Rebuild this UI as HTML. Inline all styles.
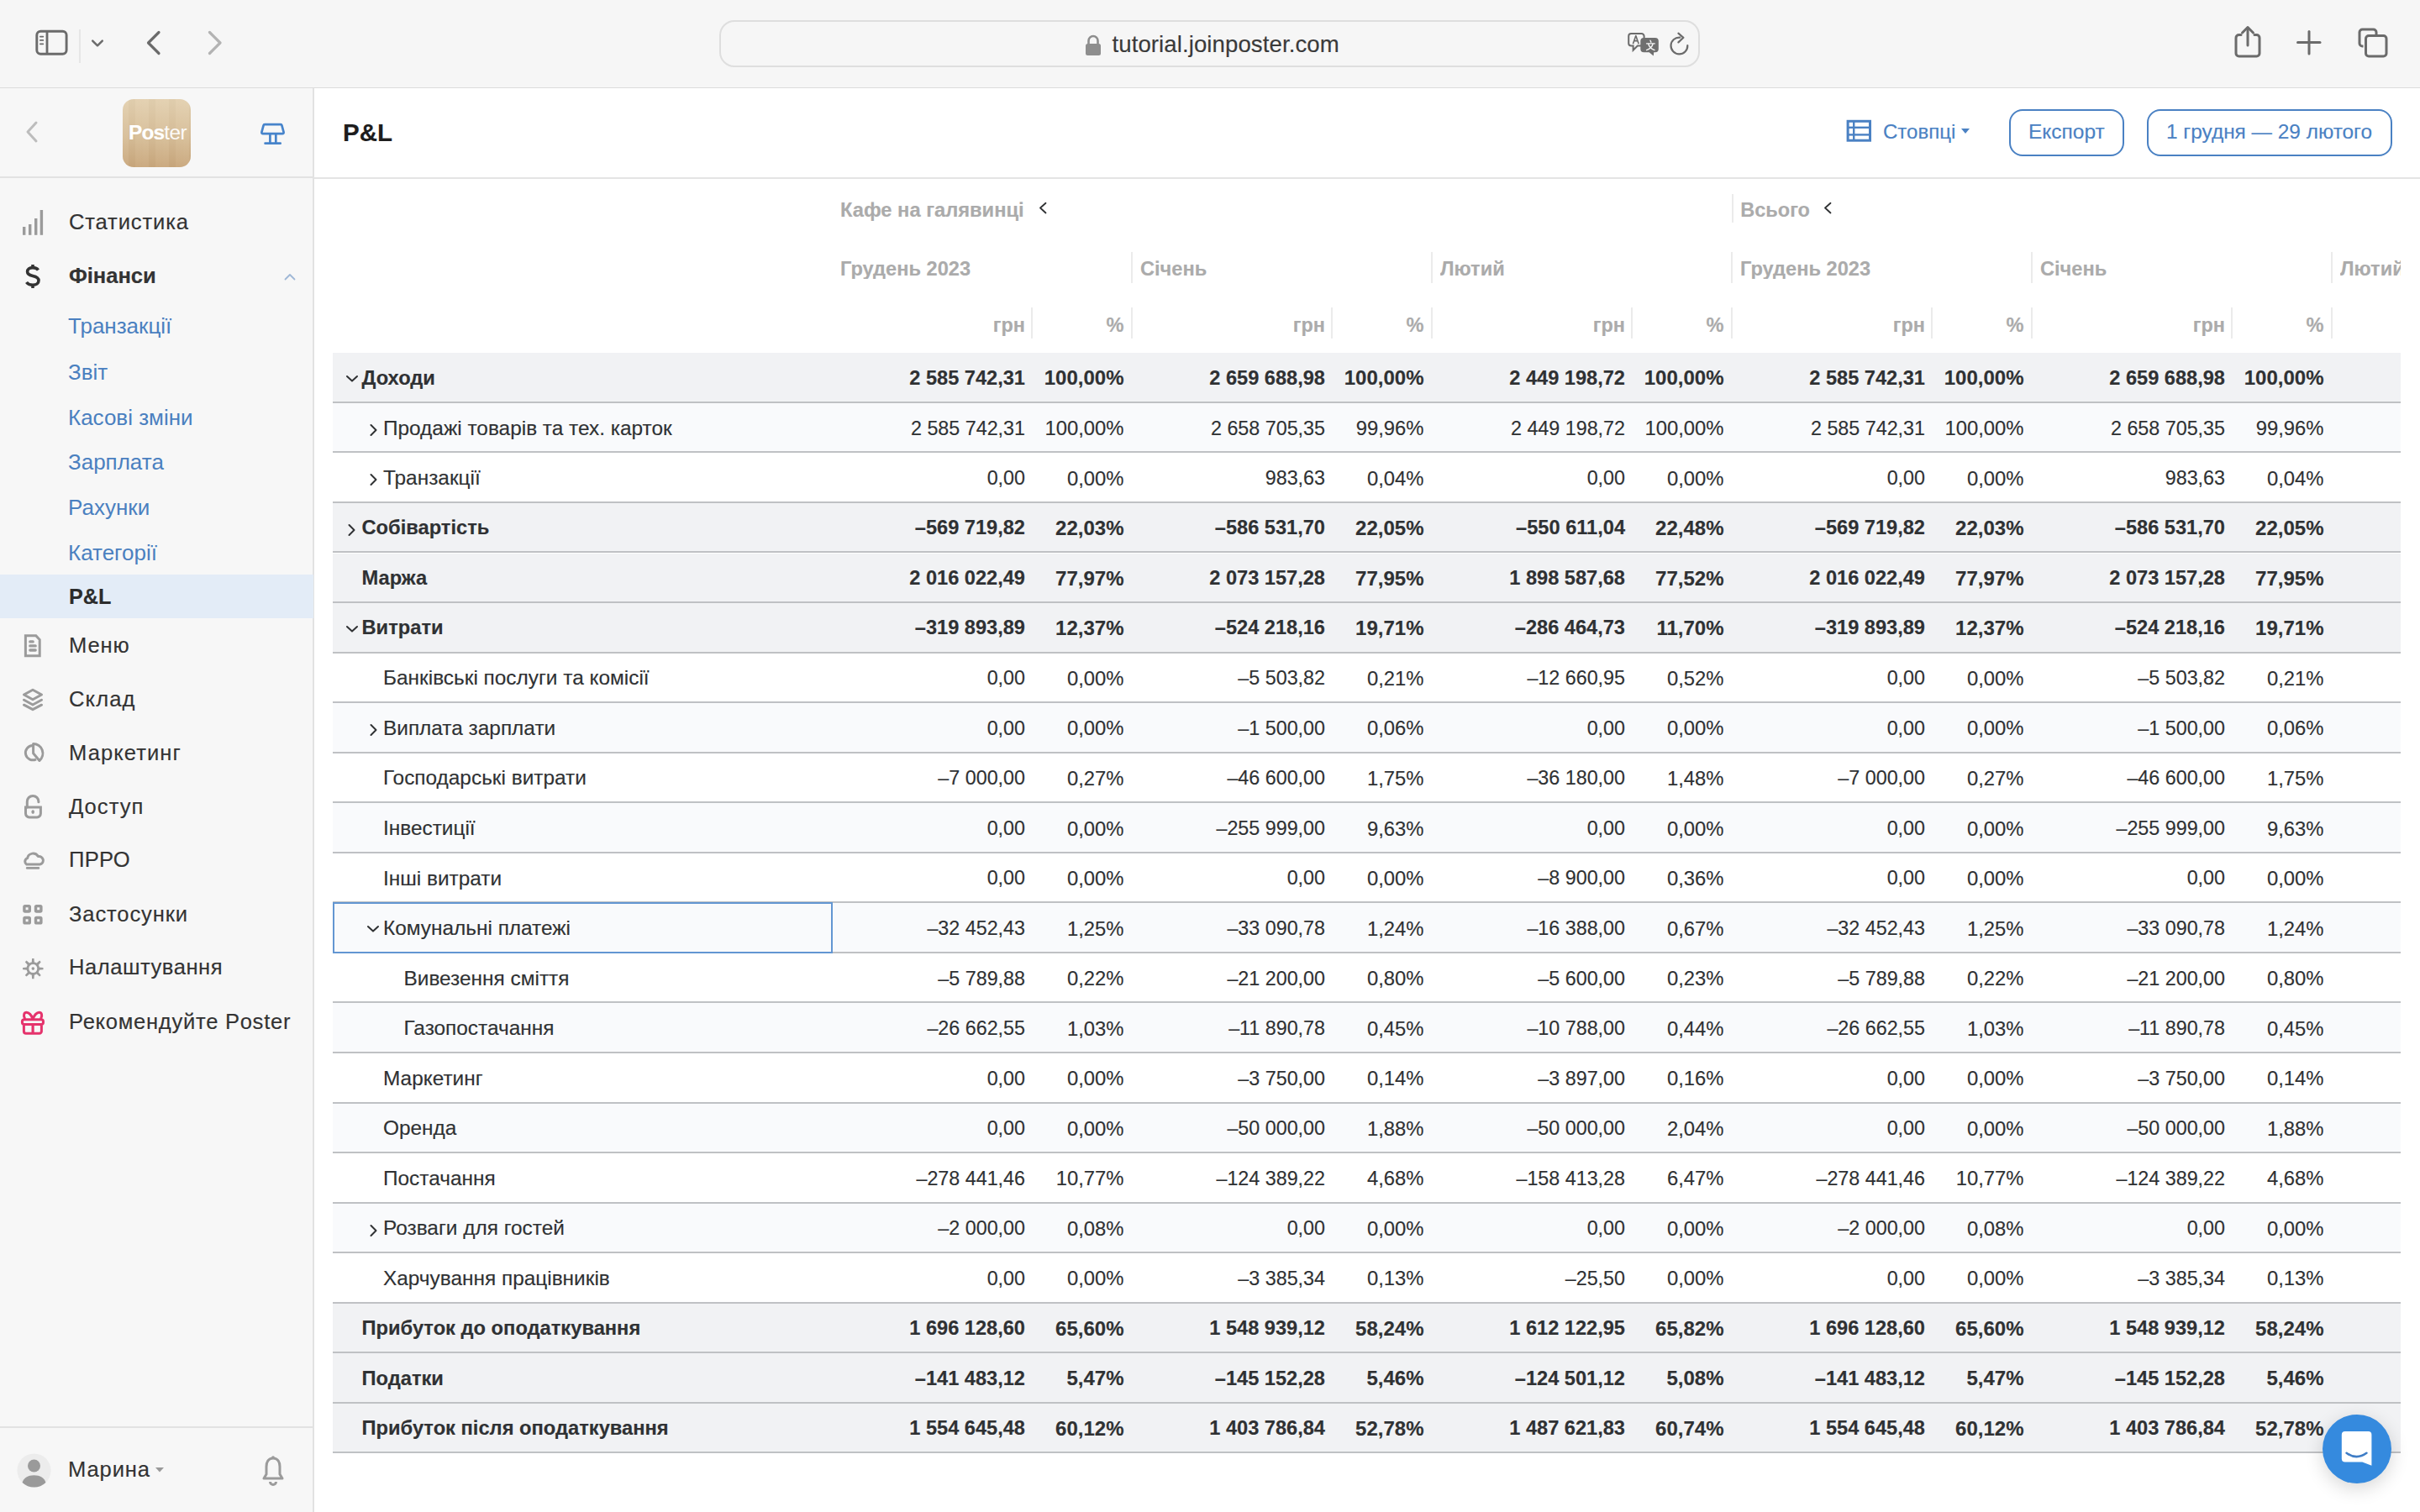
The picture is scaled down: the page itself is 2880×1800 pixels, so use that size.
<!DOCTYPE html><html><head><meta charset="utf-8"><style>
*{box-sizing:border-box;margin:0;padding:0}
html,body{width:2880px;height:1800px;overflow:hidden;background:#fff;font-family:"Liberation Sans", sans-serif;}
.abs{position:absolute}
.t{position:absolute;white-space:pre;line-height:1;-webkit-text-stroke:0.15px currentColor}
#toolbar{position:absolute;left:0;top:0;width:2880px;height:105.5px;background:#f6f6f6;border-bottom:2px solid #dcdcdc}
#side{position:absolute;left:0;top:105px;width:374px;height:1695px;background:#f7f7f7;border-right:2px solid #e2e2e2}
#mainhead{position:absolute;left:374px;top:105px;width:2506px;height:108px;background:#fff;border-bottom:2px solid #e4e4e4}
.side-main{color:#333;font-size:27px}
.side-sub{color:#4a86c4;font-size:26px}
.hdr{color:#aaaaaa;font-weight:bold;font-size:24px}
.row{position:absolute;left:396px;width:2461px;border-bottom:2px solid #bfc1c4;overflow:hidden}
.row.sec{background:#f1f2f4}
.row.odd{background:#f9fafc}
.row.even{background:#fff}
.cell{position:absolute;top:0;white-space:pre;font-size:24px;color:#2f3133;text-align:right;-webkit-text-stroke:0.15px currentColor}
.sec .cell,.sec .lbl{font-weight:bold}
.lbl{position:absolute;top:0;white-space:pre;font-size:24px;color:#2f3133;-webkit-text-stroke:0.15px currentColor}
.vsep{position:absolute;width:1.5px;background:#ebebeb}
</style></head><body>
<div id="toolbar"></div>
<svg class="abs" style="left:40px;top:34px" width="44" height="34" viewBox="0 0 44 34">
<rect x="3.8" y="3.2" width="35.3" height="27" rx="4.5" fill="none" stroke="#6b6b6b" stroke-width="2.9"/>
<line x1="16" y1="3" x2="16" y2="30" stroke="#6b6b6b" stroke-width="2.8"/>
<line x1="7.9" y1="9.6" x2="11.3" y2="9.6" stroke="#6b6b6b" stroke-width="1.8" stroke-linecap="round"/>
<line x1="7.9" y1="13.9" x2="11.3" y2="13.9" stroke="#6b6b6b" stroke-width="1.8" stroke-linecap="round"/>
<line x1="7.9" y1="18.3" x2="11.3" y2="18.3" stroke="#6b6b6b" stroke-width="1.8" stroke-linecap="round"/>
</svg>
<div class="abs" style="left:94px;top:35px;width:2px;height:40px;background:#e6e6e6"></div>
<svg class="abs" style="left:106px;top:44px" width="20" height="14" viewBox="0 0 20 14"><polyline points="4.2,4.6 10,10.3 15.8,4.6" fill="none" stroke="#6b6b6b" stroke-width="2.5" stroke-linecap="round" stroke-linejoin="round"/></svg>
<svg class="abs" style="left:170px;top:34px" width="26" height="34" viewBox="0 0 26 34"><polyline points="19,4.5 6.5,17 19,29.5" fill="none" stroke="#6b6b6b" stroke-width="3.2" stroke-linecap="round" stroke-linejoin="round"/></svg>
<svg class="abs" style="left:243px;top:34px" width="26" height="34" viewBox="0 0 26 34"><polyline points="6.5,4.5 19,17 6.5,29.5" fill="none" stroke="#b3b3b3" stroke-width="3.2" stroke-linecap="round" stroke-linejoin="round"/></svg>
<div class="abs" style="left:856px;top:24px;width:1167px;height:56px;border:2px solid #dedede;border-radius:18px;background:#f6f6f6"></div>
<svg class="abs" style="left:1290px;top:39px" width="22" height="30" viewBox="0 0 22 30">
<path d="M5.5 13 V9.5 a5.5 5.5 0 0 1 11 0 V13" fill="none" stroke="#8e8e8e" stroke-width="2.6"/>
<rect x="2" y="13" width="18" height="14" rx="2.5" fill="#8e8e8e"/></svg>
<div class="t" style="left:1323.5px;top:38.94px;font-size:27.6px;color:#3a3a3a;font-weight:400;letter-spacing:0.08px">tutorial.joinposter.com</div>
<svg class="abs" style="left:1934px;top:37px" width="42" height="32" viewBox="0 0 42 32">
<path d="M7.2 3.1 H19.6 a3 3 0 0 1 3 3 V14.5 a3 3 0 0 1 -3 3 H14.8 L9.6 22.8 V17.5 H7.2 a3 3 0 0 1 -3 -3 V6.1 a3 3 0 0 1 3 -3z" fill="#f6f6f6" stroke="#6b6b6b" stroke-width="2"/>
<path d="M9.4 15.2 L12.8 5.6 L16.2 15.2 M10.6 11.6 H15" fill="none" stroke="#6b6b6b" stroke-width="1.6" stroke-linejoin="round"/>
<path d="M22.3 8 H35.8 a4 4 0 0 1 4 4 V21.2 a4 4 0 0 1 -4 4 H34.2 L33.8 29.6 L28.6 25.2 H22.3 a4 4 0 0 1 -4 -4 V12 a4 4 0 0 1 4 -4z" fill="#6f6f6f"/>
<path d="M25.6 14.9 H35.2 M30 11.2 L30.9 13.2 M27.6 15 C28.8 19.4 31.4 21.4 35 22.6 M33.2 15 C32 19.4 29.4 21.4 25.6 22.6" fill="none" stroke="#f6f6f6" stroke-width="1.4" stroke-linecap="round"/>
</svg>
<svg class="abs" style="left:1984px;top:36px" width="30" height="32" viewBox="0 0 30 32">
<path d="M15.2 8.6 A9.9 9.9 0 1 0 24.3 18.2" fill="none" stroke="#6b6b6b" stroke-width="2.2" stroke-linecap="round"/>
<polyline points="13.4,3.7 19.4,8.8 13.4,14.4" fill="none" stroke="#6b6b6b" stroke-width="2.2" stroke-linecap="round" stroke-linejoin="round"/>
</svg>
<svg class="abs" style="left:2656px;top:29px" width="38" height="42" viewBox="0 0 38 42">
<path d="M11 12.5 H8.5 a3.5 3.5 0 0 0 -3.5 3.5 V34.5 a3.5 3.5 0 0 0 3.5 3.5 H29.5 a3.5 3.5 0 0 0 3.5 -3.5 V16 a3.5 3.5 0 0 0 -3.5 -3.5 H27" fill="none" stroke="#6b6b6b" stroke-width="3" stroke-linecap="round"/>
<line x1="19" y1="4" x2="19" y2="25" stroke="#6b6b6b" stroke-width="3" stroke-linecap="round"/>
<polyline points="12.5,10 19,3.5 25.5,10" fill="none" stroke="#6b6b6b" stroke-width="3" stroke-linecap="round" stroke-linejoin="round"/>
</svg>
<svg class="abs" style="left:2730px;top:33px" width="36" height="36" viewBox="0 0 36 36">
<line x1="18" y1="4.5" x2="18" y2="31" stroke="#6b6b6b" stroke-width="3" stroke-linecap="round"/>
<line x1="4.5" y1="17.5" x2="31" y2="17.5" stroke="#6b6b6b" stroke-width="3" stroke-linecap="round"/>
</svg>
<svg class="abs" style="left:2802px;top:30px" width="44" height="42" viewBox="0 0 44 42">
<path d="M10.5 25 H9.5 a3.5 3.5 0 0 1 -3.5 -3.5 V8.5 a3.5 3.5 0 0 1 3.5 -3.5 H22.5 a3.5 3.5 0 0 1 3.5 3.5 V12" fill="none" stroke="#6b6b6b" stroke-width="3"/>
<rect x="13.5" y="12.5" width="24.5" height="24.5" rx="3.5" fill="#f6f6f6" stroke="#6b6b6b" stroke-width="3"/>
</svg>
<div id="side"></div>
<div class="abs" style="left:0;top:210px;width:373px;height:2px;background:#e2e2e2"></div>
<svg class="abs" style="left:28px;top:142px" width="20" height="30" viewBox="0 0 20 30"><polyline points="15,4 5,15 15,26" fill="none" stroke="#bdbdbd" stroke-width="3" stroke-linecap="round" stroke-linejoin="round"/></svg>
<div class="abs" style="left:146px;top:118px;width:81px;height:81px;border-radius:13px;overflow:hidden;background:linear-gradient(180deg,#e3d0b0 0%,#d7be98 55%,#c9a77c 100%)">
<div class="abs" style="left:0;top:0;width:81px;height:81px;background:repeating-linear-gradient(90deg,rgba(255,255,255,0.04) 0 7px,rgba(0,0,0,0.015) 7px 15px,rgba(255,255,255,0.03) 15px 24px)"></div>
</div>
<div class="t" style="left:153px;top:145.6px;font-size:24.4px;color:#fff;letter-spacing:-0.8px"><b>Pos</b><span style="font-weight:400;letter-spacing:-0.6px;opacity:0.93;-webkit-text-stroke:0">ter</span></div>
<svg class="abs" style="left:306px;top:143px" width="38" height="34" viewBox="0 0 38 34">
<path d="M9 5.2 H28 a1.5 1.5 0 0 1 1.45 1.1 L31.6 14.3 a1.5 1.5 0 0 1 -1.45 1.9 H6.85 a1.5 1.5 0 0 1 -1.45 -1.9 L7.55 6.3 A1.5 1.5 0 0 1 9 5.2z" fill="none" stroke="#4784cb" stroke-width="2.7" stroke-linejoin="round"/>
<line x1="15.4" y1="16.2" x2="15.4" y2="27" stroke="#4784cb" stroke-width="2.7"/>
<line x1="22.3" y1="16.2" x2="22.3" y2="27" stroke="#4784cb" stroke-width="2.7"/>
<line x1="9.6" y1="27.7" x2="27.7" y2="27.7" stroke="#4784cb" stroke-width="2.7" stroke-linecap="round"/>
</svg>
<svg class="abs" style="left:24px;top:248px" width="30" height="34" viewBox="0 0 30 34">
<rect x="3" y="22" width="3.4" height="9.8" fill="#9b9b9b"/><rect x="10" y="19" width="3.4" height="12.8" fill="#9b9b9b"/>
<rect x="17" y="12" width="3.4" height="19.8" fill="#9b9b9b"/><rect x="23.7" y="2" width="3.4" height="29.8" fill="#9b9b9b"/></svg>
<div class="t" style="left:82px;top:251.93px;font-size:25.6px;color:#333;font-weight:400;letter-spacing:0.84px">Статистика</div>
<svg class="abs" style="left:25px;top:312px" width="28" height="34" viewBox="0 0 28 34">
<path d="M20.5 9.5 C19 7.3 17 6.6 14 6.6 C10 6.6 7.6 8.5 7.6 11.5 C7.6 14.5 10 15.6 14 16.4 C18.5 17.3 21 18.6 21 22 C21 25.3 18.3 27.3 14 27.3 C10.5 27.3 8.2 26.3 6.5 24" fill="none" stroke="#333" stroke-width="3.6" stroke-linecap="butt"/>
<line x1="14" y1="3" x2="14" y2="7" stroke="#333" stroke-width="3.6"/>
<line x1="14" y1="27" x2="14" y2="31" stroke="#333" stroke-width="3.6"/>
</svg>
<div class="t" style="left:82px;top:315.93px;font-size:25.6px;color:#333;font-weight:700;letter-spacing:-0.05px">Фінанси</div>
<svg class="abs" style="left:336px;top:322px" width="18" height="14" viewBox="0 0 18 14"><polyline points="3.5,10.5 9,5 14.5,10.5" fill="none" stroke="#9fb8d6" stroke-width="1.8" stroke-linecap="round" stroke-linejoin="round"/></svg>
<div class="t" style="left:81px;top:375.09px;font-size:26px;color:#4a80c0;font-weight:400;-webkit-text-stroke:0">Транзакції</div>
<div class="t" style="left:81px;top:429.69px;font-size:26px;color:#4a80c0;font-weight:400;-webkit-text-stroke:0">Звіт</div>
<div class="t" style="left:81px;top:483.79px;font-size:26px;color:#4a80c0;font-weight:400;-webkit-text-stroke:0">Касові зміни</div>
<div class="t" style="left:81px;top:536.79px;font-size:26px;color:#4a80c0;font-weight:400;-webkit-text-stroke:0">Зарплата</div>
<div class="t" style="left:81px;top:590.79px;font-size:26px;color:#4a80c0;font-weight:400;-webkit-text-stroke:0">Рахунки</div>
<div class="t" style="left:81px;top:644.89px;font-size:26px;color:#4a80c0;font-weight:400;-webkit-text-stroke:0">Категорії</div>
<div class="abs" style="left:0;top:684px;width:373px;height:52px;background:#e3ecf7"></div>
<div class="t" style="left:82px;top:698.27px;font-size:25.2px;color:#2c2c2c;font-weight:700;">P&amp;L</div>
<div class="t" style="left:82px;top:755.93px;font-size:25.6px;color:#333;font-weight:400;letter-spacing:0.88px">Меню</div>
<div class="t" style="left:82px;top:819.63px;font-size:25.6px;color:#333;font-weight:400;letter-spacing:1.1px">Склад</div>
<div class="t" style="left:82px;top:883.73px;font-size:25.6px;color:#333;font-weight:400;letter-spacing:1.05px">Маркетинг</div>
<div class="t" style="left:82px;top:947.63px;font-size:25.6px;color:#333;font-weight:400;letter-spacing:1.0px">Доступ</div>
<div class="t" style="left:82px;top:1010.93px;font-size:25.6px;color:#333;font-weight:400;letter-spacing:0.3px">ПРРО</div>
<div class="t" style="left:82px;top:1075.93px;font-size:25.6px;color:#333;font-weight:400;letter-spacing:0.85px">Застосунки</div>
<div class="t" style="left:82px;top:1139.43px;font-size:25.6px;color:#333;font-weight:400;letter-spacing:0.52px">Налаштування</div>
<div class="t" style="left:82px;top:1203.83px;font-size:25.6px;color:#333;font-weight:400;letter-spacing:0.71px">Рекомендуйте Poster</div>
<svg class="abs" style="left:26px;top:753px" width="26" height="32" viewBox="0 0 26 32">
<path d="M4.4 3.8 H16.8 L21.2 8.6 V27.7 H4.4 Z" fill="none" stroke="#9b9b9b" stroke-width="3" stroke-linejoin="miter"/>
<line x1="9.8" y1="10.9" x2="13.2" y2="10.9" stroke="#9b9b9b" stroke-width="3.3" stroke-linecap="round"/>
<line x1="9.8" y1="15.9" x2="16.2" y2="15.9" stroke="#9b9b9b" stroke-width="3.3" stroke-linecap="round"/>
<line x1="9.8" y1="21.0" x2="16.2" y2="21.0" stroke="#9b9b9b" stroke-width="3.3" stroke-linecap="round"/>
</svg>
<svg class="abs" style="left:24px;top:818px" width="30" height="30" viewBox="0 0 30 30">
<path d="M4.5 9 L15 3.2 L25.5 9 L15 14.8 Z" fill="none" stroke="#9b9b9b" stroke-width="3" stroke-linejoin="round"/>
<path d="M4.5 15.3 L15 21 L25.5 15.3" fill="none" stroke="#9b9b9b" stroke-width="3" stroke-linecap="round" stroke-linejoin="round"/>
<path d="M4.5 21.2 L15 26.7 L25.5 21.2" fill="none" stroke="#9b9b9b" stroke-width="3" stroke-linecap="round" stroke-linejoin="round"/>
</svg>
<svg class="abs" style="left:26px;top:880px" width="30" height="30" viewBox="0 0 30 30">
<path d="M13 7.6 A8.6 8.6 0 1 0 17 23.8" fill="none" stroke="#9b9b9b" stroke-width="3"/>
<path d="M13.6 5.4 A11.4 11.4 0 0 1 20.9 25.5 L13.6 16.8 Z" fill="none" stroke="#9b9b9b" stroke-width="3" stroke-linejoin="round"/>
</svg>
<svg class="abs" style="left:26px;top:943px" width="28" height="34" viewBox="0 0 28 34">
<path d="M6.3 18 V11.2 A6.8 6.8 0 0 1 19.9 11.2 V11.8" fill="none" stroke="#9b9b9b" stroke-width="3" stroke-linecap="round"/>
<path d="M4.5 18 H22.4 V25.6 A4.3 4.3 0 0 1 18.1 29.9 H8.8 A4.3 4.3 0 0 1 4.5 25.6 Z" fill="none" stroke="#9b9b9b" stroke-width="3"/>
<ellipse cx="13.2" cy="23.6" rx="1.8" ry="2.3" fill="#9b9b9b"/>
</svg>
<svg class="abs" style="left:23px;top:1010px" width="34" height="28" viewBox="0 0 34 28">
<path d="M8.6 19 A4.2 4.2 0 0 1 9.6 11.6 A6.9 6.9 0 0 1 22.4 9.6 A4.7 4.7 0 0 1 24.6 19 Z" fill="none" stroke="#9b9b9b" stroke-width="3" stroke-linejoin="round"/>
<line x1="9.2" y1="23.4" x2="22.9" y2="23.4" stroke="#9b9b9b" stroke-width="2.6" stroke-linecap="round"/>
</svg>
<svg class="abs" style="left:25px;top:1075px" width="28" height="28" viewBox="0 0 28 28">
<rect x="3.9" y="3.6" width="6.4" height="6.4" rx="1" fill="none" stroke="#9b9b9b" stroke-width="3.4"/>
<rect x="17.5" y="3.6" width="6.4" height="6.4" rx="1" fill="none" stroke="#9b9b9b" stroke-width="3.4"/>
<rect x="3.9" y="17.5" width="6.4" height="6.4" rx="1" fill="none" stroke="#9b9b9b" stroke-width="3.4"/>
<rect x="17.5" y="17.5" width="6.4" height="6.4" rx="1" fill="none" stroke="#9b9b9b" stroke-width="3.4"/>
</svg>
<svg class="abs" style="left:24px;top:1138px" width="30" height="30" viewBox="0 0 30 30">
<g transform="translate(15.3 15.1)"><path d="M-1.6 -6.5 L-1.2 -12.2 L1.2 -12.2 L1.6 -6.5 Z" fill="#9b9b9b" transform="rotate(0)"/><path d="M-1.6 -6.5 L-1.2 -12.2 L1.2 -12.2 L1.6 -6.5 Z" fill="#9b9b9b" transform="rotate(45)"/><path d="M-1.6 -6.5 L-1.2 -12.2 L1.2 -12.2 L1.6 -6.5 Z" fill="#9b9b9b" transform="rotate(90)"/><path d="M-1.6 -6.5 L-1.2 -12.2 L1.2 -12.2 L1.6 -6.5 Z" fill="#9b9b9b" transform="rotate(135)"/><path d="M-1.6 -6.5 L-1.2 -12.2 L1.2 -12.2 L1.6 -6.5 Z" fill="#9b9b9b" transform="rotate(180)"/><path d="M-1.6 -6.5 L-1.2 -12.2 L1.2 -12.2 L1.6 -6.5 Z" fill="#9b9b9b" transform="rotate(225)"/><path d="M-1.6 -6.5 L-1.2 -12.2 L1.2 -12.2 L1.6 -6.5 Z" fill="#9b9b9b" transform="rotate(270)"/><path d="M-1.6 -6.5 L-1.2 -12.2 L1.2 -12.2 L1.6 -6.5 Z" fill="#9b9b9b" transform="rotate(315)"/>
<circle cx="0" cy="0" r="6.4" fill="none" stroke="#9b9b9b" stroke-width="2.8"/>
<circle cx="0" cy="0" r="1.8" fill="#9b9b9b"/></g>
</svg>
<svg class="abs" style="left:23px;top:1201px" width="34" height="34" viewBox="0 0 34 34">
<rect x="3.4" y="12.7" width="25.1" height="5.8" rx="2.5" fill="none" stroke="#e5336c" stroke-width="3"/>
<path d="M5.4 19.5 V26.7 A2.5 2.5 0 0 0 7.9 29.2 H23.9 A2.5 2.5 0 0 0 26.4 26.7 V19.5" fill="none" stroke="#e5336c" stroke-width="3"/>
<line x1="16.1" y1="19" x2="16.1" y2="29" stroke="#e5336c" stroke-width="3.2"/>
<path d="M15.6 11.5 C14.5 7.5 11.5 4.2 8.6 4.2 C5.6 4.2 4.6 7.6 6.4 11.2" fill="none" stroke="#e5336c" stroke-width="3" stroke-linecap="round"/>
<path d="M16.6 11.5 C17.7 7.5 20.7 4.2 23.6 4.2 C26.6 4.2 27.6 7.6 25.8 11.2" fill="none" stroke="#e5336c" stroke-width="3" stroke-linecap="round"/>
</svg>
<div class="abs" style="left:0;top:1698px;width:373px;height:2px;background:#e2e2e2"></div>
<svg class="abs" style="left:20px;top:1730px" width="41" height="41" viewBox="0 0 41 41">
<circle cx="20.5" cy="20.5" r="20" fill="#ececec"/>
<circle cx="20.5" cy="15" r="7.5" fill="#9a9a9a"/>
<path d="M6.6 35 C8 29 13.5 26.2 20.5 26.2 C27.5 26.2 33 29 34.4 35 A20 20 0 0 1 6.6 35 Z" fill="#9a9a9a"/>
</svg>
<div class="t" style="left:81px;top:1736.53px;font-size:25.6px;color:#333;font-weight:400;letter-spacing:0.87px">Марина</div>
<svg class="abs" style="left:183px;top:1745px" width="14" height="10" viewBox="0 0 14 10"><polygon points="2,2 12,2 7,7.5" fill="#999"/></svg>
<svg class="abs" style="left:310px;top:1731px" width="30" height="40" viewBox="0 0 30 40">
<path d="M15 5 C9 5 7 10 7 15 V24 L4 29 H26 L23 24 V15 C23 10 21 5 15 5z" fill="none" stroke="#9b9b9b" stroke-width="3" stroke-linejoin="round"/>
<path d="M11.5 33 a3.5 3.5 0 0 0 7 0" fill="none" stroke="#9b9b9b" stroke-width="3"/>
<circle cx="15" cy="4" r="1.8" fill="#9b9b9b"/>
</svg>
<div id="mainhead"></div>
<div class="t" style="left:408px;top:142.63px;font-size:29.5px;color:#1d1d1d;font-weight:700;">P&amp;L</div>
<svg class="abs" style="left:2195px;top:141px" width="34" height="30" viewBox="0 0 34 30">
<rect x="4.1" y="3.3" width="26.4" height="22.9" fill="none" stroke="#4a81c3" stroke-width="3"/>
<line x1="3" y1="10.8" x2="31" y2="10.8" stroke="#4a81c3" stroke-width="2.4"/>
<line x1="3" y1="19.4" x2="31" y2="19.4" stroke="#4a81c3" stroke-width="2.4"/>
<line x1="11.2" y1="3" x2="11.2" y2="27" stroke="#4a81c3" stroke-width="2.4"/>
</svg>
<div class="t" style="left:2241px;top:145.18px;font-size:24px;color:#4a81c3;font-weight:400;">Стовпці</div>
<svg class="abs" style="left:2332px;top:151px" width="14" height="10" viewBox="0 0 14 10"><polygon points="2,2 12,2 7,8" fill="#4a81c3"/></svg>
<div class="abs" style="left:2391px;top:129.5px;width:137px;height:56px;border:2px solid #4a81c3;border-radius:16px"></div>
<div class="t" style="left:2414px;top:144.76px;font-size:24.5px;color:#4a81c3;font-weight:400;">Експорт</div>
<div class="abs" style="left:2555px;top:129.5px;width:292px;height:56px;border:2px solid #4a81c3;border-radius:16px"></div>
<div class="t" style="left:2578px;top:144.85px;font-size:24.4px;color:#4a81c3;font-weight:400;">1 грудня — 29 лютого</div>
<div class="t" style="left:1000px;top:238.94px;font-size:23.7px;color:#ababab;font-weight:700;">Кафе на галявинці</div>
<svg class="abs" style="left:1233px;top:238px" width="16" height="20" viewBox="0 0 16 20"><polyline points="11.5,3.8 5,9.5 11.5,15.5" fill="none" stroke="#2f3133" stroke-width="1.8" stroke-linecap="round" stroke-linejoin="round"/></svg>
<div class="t" style="left:2071.3px;top:239.11px;font-size:23.5px;color:#ababab;font-weight:700;">Всього</div>
<svg class="abs" style="left:2167px;top:238px" width="16" height="20" viewBox="0 0 16 20"><polyline points="11.5,3.8 5,9.5 11.5,15.5" fill="none" stroke="#2f3133" stroke-width="1.8" stroke-linecap="round" stroke-linejoin="round"/></svg>
<div class="vsep" style="left:2061px;top:231px;height:34px"></div>
<div class="t" style="left:1000px;top:308.52px;font-size:23.6px;color:#ababab;font-weight:700;max-width:1857px;overflow:hidden">Грудень 2023</div>
<div class="t" style="right:1660px;top:376.19px;font-size:23.4px;color:#ababab;font-weight:700;text-align:right;">грн</div>
<div class="vsep" style="left:1227px;top:366px;height:37px"></div>
<div class="t" style="right:1542.5px;top:376.02px;font-size:23.6px;color:#ababab;font-weight:700;text-align:right;">%</div>
<div class="vsep" style="left:1346px;top:300px;height:37px"></div>
<div class="t" style="left:1357px;top:308.52px;font-size:23.6px;color:#ababab;font-weight:700;max-width:1500px;overflow:hidden">Січень</div>
<div class="t" style="right:1303px;top:376.19px;font-size:23.4px;color:#ababab;font-weight:700;text-align:right;">грн</div>
<div class="vsep" style="left:1584px;top:366px;height:37px"></div>
<div class="t" style="right:1185.5px;top:376.02px;font-size:23.6px;color:#ababab;font-weight:700;text-align:right;">%</div>
<div class="vsep" style="left:1346px;top:366px;height:37px"></div>
<div class="vsep" style="left:1703px;top:300px;height:37px"></div>
<div class="t" style="left:1714px;top:308.52px;font-size:23.6px;color:#ababab;font-weight:700;max-width:1143px;overflow:hidden">Лютий</div>
<div class="t" style="right:946px;top:376.19px;font-size:23.4px;color:#ababab;font-weight:700;text-align:right;">грн</div>
<div class="vsep" style="left:1941px;top:366px;height:37px"></div>
<div class="t" style="right:828.5px;top:376.02px;font-size:23.6px;color:#ababab;font-weight:700;text-align:right;">%</div>
<div class="vsep" style="left:1703px;top:366px;height:37px"></div>
<div class="vsep" style="left:2060px;top:300px;height:37px"></div>
<div class="t" style="left:2071px;top:308.52px;font-size:23.6px;color:#ababab;font-weight:700;max-width:786px;overflow:hidden">Грудень 2023</div>
<div class="t" style="right:589px;top:376.19px;font-size:23.4px;color:#ababab;font-weight:700;text-align:right;">грн</div>
<div class="vsep" style="left:2298px;top:366px;height:37px"></div>
<div class="t" style="right:471.5px;top:376.02px;font-size:23.6px;color:#ababab;font-weight:700;text-align:right;">%</div>
<div class="vsep" style="left:2060px;top:366px;height:37px"></div>
<div class="vsep" style="left:2417px;top:300px;height:37px"></div>
<div class="t" style="left:2428px;top:308.52px;font-size:23.6px;color:#ababab;font-weight:700;max-width:429px;overflow:hidden">Січень</div>
<div class="t" style="right:232px;top:376.19px;font-size:23.4px;color:#ababab;font-weight:700;text-align:right;">грн</div>
<div class="vsep" style="left:2655px;top:366px;height:37px"></div>
<div class="t" style="right:114.5px;top:376.02px;font-size:23.6px;color:#ababab;font-weight:700;text-align:right;">%</div>
<div class="vsep" style="left:2417px;top:366px;height:37px"></div>
<div class="vsep" style="left:2774px;top:300px;height:37px"></div>
<div class="t" style="left:2785px;top:308.52px;font-size:23.6px;color:#ababab;font-weight:700;max-width:72px;overflow:hidden">Лютий</div>
<div class="vsep" style="left:2774px;top:366px;height:37px"></div>
<div class="abs" style="left:0;top:0;width:2857px;height:1800px;overflow:hidden">
<div class="row sec" style="top:420.30px;height:59.55px">
<svg class="abs" style="left:13.5px;top:25px" width="18" height="12" viewBox="0 0 18 12"><polyline points="3,3 9,8.6 15,3" fill="none" stroke="#2f3133" stroke-width="2" stroke-linecap="round" stroke-linejoin="round"/></svg>
<div class="lbl" style="left:34.5px;top:18.34px;line-height:1;font-size:23.7px">Доходи</div>
<div class="cell" style="right:1637.00px;top:18.42px;line-height:1;font-size:23.6px">2 585 742,31</div>
<div class="cell" style="right:1519.50px;top:18.08px;line-height:1;font-size:24.0px">100,00%</div>
<div class="cell" style="right:1280.00px;top:18.42px;line-height:1;font-size:23.6px">2 659 688,98</div>
<div class="cell" style="right:1162.50px;top:18.08px;line-height:1;font-size:24.0px">100,00%</div>
<div class="cell" style="right:923.00px;top:18.42px;line-height:1;font-size:23.6px">2 449 198,72</div>
<div class="cell" style="right:805.50px;top:18.08px;line-height:1;font-size:24.0px">100,00%</div>
<div class="cell" style="right:566.00px;top:18.42px;line-height:1;font-size:23.6px">2 585 742,31</div>
<div class="cell" style="right:448.50px;top:18.08px;line-height:1;font-size:24.0px">100,00%</div>
<div class="cell" style="right:209.00px;top:18.42px;line-height:1;font-size:23.6px">2 659 688,98</div>
<div class="cell" style="right:91.50px;top:18.08px;line-height:1;font-size:24.0px">100,00%</div>
</div>
<div class="row odd" style="top:479.85px;height:59.55px">
<svg class="abs" style="left:42.5px;top:24px" width="12" height="16" viewBox="0 0 12 16"><polyline points="2.5,2 8.5,8 2.5,14" fill="none" stroke="#2f3133" stroke-width="2" stroke-linecap="round" stroke-linejoin="round"/></svg>
<div class="lbl" style="left:60px;top:17.75px;line-height:1;font-size:24.4px">Продажі товарів та тех. карток</div>
<div class="cell" style="right:1637.00px;top:18.68px;line-height:1;font-size:23.3px">2 585 742,31</div>
<div class="cell" style="right:1519.50px;top:18.25px;line-height:1;font-size:23.8px">100,00%</div>
<div class="cell" style="right:1280.00px;top:18.68px;line-height:1;font-size:23.3px">2 658 705,35</div>
<div class="cell" style="right:1162.50px;top:18.25px;line-height:1;font-size:23.8px">99,96%</div>
<div class="cell" style="right:923.00px;top:18.68px;line-height:1;font-size:23.3px">2 449 198,72</div>
<div class="cell" style="right:805.50px;top:18.25px;line-height:1;font-size:23.8px">100,00%</div>
<div class="cell" style="right:566.00px;top:18.68px;line-height:1;font-size:23.3px">2 585 742,31</div>
<div class="cell" style="right:448.50px;top:18.25px;line-height:1;font-size:23.8px">100,00%</div>
<div class="cell" style="right:209.00px;top:18.68px;line-height:1;font-size:23.3px">2 658 705,35</div>
<div class="cell" style="right:91.50px;top:18.25px;line-height:1;font-size:23.8px">99,96%</div>
</div>
<div class="row even" style="top:539.40px;height:59.55px">
<svg class="abs" style="left:42.5px;top:24px" width="12" height="16" viewBox="0 0 12 16"><polyline points="2.5,2 8.5,8 2.5,14" fill="none" stroke="#2f3133" stroke-width="2" stroke-linecap="round" stroke-linejoin="round"/></svg>
<div class="lbl" style="left:60px;top:17.75px;line-height:1;font-size:24.4px">Транзакції</div>
<div class="cell" style="right:1637.00px;top:18.68px;line-height:1;font-size:23.3px">0,00</div>
<div class="cell" style="right:1519.50px;top:18.25px;line-height:1;font-size:23.8px">0,00%</div>
<div class="cell" style="right:1280.00px;top:18.68px;line-height:1;font-size:23.3px">983,63</div>
<div class="cell" style="right:1162.50px;top:18.25px;line-height:1;font-size:23.8px">0,04%</div>
<div class="cell" style="right:923.00px;top:18.68px;line-height:1;font-size:23.3px">0,00</div>
<div class="cell" style="right:805.50px;top:18.25px;line-height:1;font-size:23.8px">0,00%</div>
<div class="cell" style="right:566.00px;top:18.68px;line-height:1;font-size:23.3px">0,00</div>
<div class="cell" style="right:448.50px;top:18.25px;line-height:1;font-size:23.8px">0,00%</div>
<div class="cell" style="right:209.00px;top:18.68px;line-height:1;font-size:23.3px">983,63</div>
<div class="cell" style="right:91.50px;top:18.25px;line-height:1;font-size:23.8px">0,04%</div>
</div>
<div class="row sec" style="top:598.95px;height:59.55px">
<svg class="abs" style="left:17.0px;top:24px" width="12" height="16" viewBox="0 0 12 16"><polyline points="2.5,2 8.5,8 2.5,14" fill="none" stroke="#2f3133" stroke-width="2" stroke-linecap="round" stroke-linejoin="round"/></svg>
<div class="lbl" style="left:34.5px;top:18.34px;line-height:1;font-size:23.7px">Собівартість</div>
<div class="cell" style="right:1637.00px;top:18.42px;line-height:1;font-size:23.6px">–569 719,82</div>
<div class="cell" style="right:1519.50px;top:18.08px;line-height:1;font-size:24.0px">22,03%</div>
<div class="cell" style="right:1280.00px;top:18.42px;line-height:1;font-size:23.6px">–586 531,70</div>
<div class="cell" style="right:1162.50px;top:18.08px;line-height:1;font-size:24.0px">22,05%</div>
<div class="cell" style="right:923.00px;top:18.42px;line-height:1;font-size:23.6px">–550 611,04</div>
<div class="cell" style="right:805.50px;top:18.08px;line-height:1;font-size:24.0px">22,48%</div>
<div class="cell" style="right:566.00px;top:18.42px;line-height:1;font-size:23.6px">–569 719,82</div>
<div class="cell" style="right:448.50px;top:18.08px;line-height:1;font-size:24.0px">22,03%</div>
<div class="cell" style="right:209.00px;top:18.42px;line-height:1;font-size:23.6px">–586 531,70</div>
<div class="cell" style="right:91.50px;top:18.08px;line-height:1;font-size:24.0px">22,05%</div>
</div>
<div class="row sec" style="top:658.50px;height:59.55px">
<div class="lbl" style="left:34.5px;top:18.34px;line-height:1;font-size:23.7px">Маржа</div>
<div class="cell" style="right:1637.00px;top:18.42px;line-height:1;font-size:23.6px">2 016 022,49</div>
<div class="cell" style="right:1519.50px;top:18.08px;line-height:1;font-size:24.0px">77,97%</div>
<div class="cell" style="right:1280.00px;top:18.42px;line-height:1;font-size:23.6px">2 073 157,28</div>
<div class="cell" style="right:1162.50px;top:18.08px;line-height:1;font-size:24.0px">77,95%</div>
<div class="cell" style="right:923.00px;top:18.42px;line-height:1;font-size:23.6px">1 898 587,68</div>
<div class="cell" style="right:805.50px;top:18.08px;line-height:1;font-size:24.0px">77,52%</div>
<div class="cell" style="right:566.00px;top:18.42px;line-height:1;font-size:23.6px">2 016 022,49</div>
<div class="cell" style="right:448.50px;top:18.08px;line-height:1;font-size:24.0px">77,97%</div>
<div class="cell" style="right:209.00px;top:18.42px;line-height:1;font-size:23.6px">2 073 157,28</div>
<div class="cell" style="right:91.50px;top:18.08px;line-height:1;font-size:24.0px">77,95%</div>
</div>
<div class="row sec" style="top:718.05px;height:59.55px">
<svg class="abs" style="left:13.5px;top:25px" width="18" height="12" viewBox="0 0 18 12"><polyline points="3,3 9,8.6 15,3" fill="none" stroke="#2f3133" stroke-width="2" stroke-linecap="round" stroke-linejoin="round"/></svg>
<div class="lbl" style="left:34.5px;top:18.34px;line-height:1;font-size:23.7px">Витрати</div>
<div class="cell" style="right:1637.00px;top:18.42px;line-height:1;font-size:23.6px">–319 893,89</div>
<div class="cell" style="right:1519.50px;top:18.08px;line-height:1;font-size:24.0px">12,37%</div>
<div class="cell" style="right:1280.00px;top:18.42px;line-height:1;font-size:23.6px">–524 218,16</div>
<div class="cell" style="right:1162.50px;top:18.08px;line-height:1;font-size:24.0px">19,71%</div>
<div class="cell" style="right:923.00px;top:18.42px;line-height:1;font-size:23.6px">–286 464,73</div>
<div class="cell" style="right:805.50px;top:18.08px;line-height:1;font-size:24.0px">11,70%</div>
<div class="cell" style="right:566.00px;top:18.42px;line-height:1;font-size:23.6px">–319 893,89</div>
<div class="cell" style="right:448.50px;top:18.08px;line-height:1;font-size:24.0px">12,37%</div>
<div class="cell" style="right:209.00px;top:18.42px;line-height:1;font-size:23.6px">–524 218,16</div>
<div class="cell" style="right:91.50px;top:18.08px;line-height:1;font-size:24.0px">19,71%</div>
</div>
<div class="row even" style="top:777.60px;height:59.55px">
<div class="lbl" style="left:60px;top:17.75px;line-height:1;font-size:24.4px">Банківські послуги та комісії</div>
<div class="cell" style="right:1637.00px;top:18.68px;line-height:1;font-size:23.3px">0,00</div>
<div class="cell" style="right:1519.50px;top:18.25px;line-height:1;font-size:23.8px">0,00%</div>
<div class="cell" style="right:1280.00px;top:18.68px;line-height:1;font-size:23.3px">–5 503,82</div>
<div class="cell" style="right:1162.50px;top:18.25px;line-height:1;font-size:23.8px">0,21%</div>
<div class="cell" style="right:923.00px;top:18.68px;line-height:1;font-size:23.3px">–12 660,95</div>
<div class="cell" style="right:805.50px;top:18.25px;line-height:1;font-size:23.8px">0,52%</div>
<div class="cell" style="right:566.00px;top:18.68px;line-height:1;font-size:23.3px">0,00</div>
<div class="cell" style="right:448.50px;top:18.25px;line-height:1;font-size:23.8px">0,00%</div>
<div class="cell" style="right:209.00px;top:18.68px;line-height:1;font-size:23.3px">–5 503,82</div>
<div class="cell" style="right:91.50px;top:18.25px;line-height:1;font-size:23.8px">0,21%</div>
</div>
<div class="row odd" style="top:837.15px;height:59.55px">
<svg class="abs" style="left:42.5px;top:24px" width="12" height="16" viewBox="0 0 12 16"><polyline points="2.5,2 8.5,8 2.5,14" fill="none" stroke="#2f3133" stroke-width="2" stroke-linecap="round" stroke-linejoin="round"/></svg>
<div class="lbl" style="left:60px;top:17.75px;line-height:1;font-size:24.4px">Виплата зарплати</div>
<div class="cell" style="right:1637.00px;top:18.68px;line-height:1;font-size:23.3px">0,00</div>
<div class="cell" style="right:1519.50px;top:18.25px;line-height:1;font-size:23.8px">0,00%</div>
<div class="cell" style="right:1280.00px;top:18.68px;line-height:1;font-size:23.3px">–1 500,00</div>
<div class="cell" style="right:1162.50px;top:18.25px;line-height:1;font-size:23.8px">0,06%</div>
<div class="cell" style="right:923.00px;top:18.68px;line-height:1;font-size:23.3px">0,00</div>
<div class="cell" style="right:805.50px;top:18.25px;line-height:1;font-size:23.8px">0,00%</div>
<div class="cell" style="right:566.00px;top:18.68px;line-height:1;font-size:23.3px">0,00</div>
<div class="cell" style="right:448.50px;top:18.25px;line-height:1;font-size:23.8px">0,00%</div>
<div class="cell" style="right:209.00px;top:18.68px;line-height:1;font-size:23.3px">–1 500,00</div>
<div class="cell" style="right:91.50px;top:18.25px;line-height:1;font-size:23.8px">0,06%</div>
</div>
<div class="row even" style="top:896.70px;height:59.55px">
<div class="lbl" style="left:60px;top:17.75px;line-height:1;font-size:24.4px">Господарські витрати</div>
<div class="cell" style="right:1637.00px;top:18.68px;line-height:1;font-size:23.3px">–7 000,00</div>
<div class="cell" style="right:1519.50px;top:18.25px;line-height:1;font-size:23.8px">0,27%</div>
<div class="cell" style="right:1280.00px;top:18.68px;line-height:1;font-size:23.3px">–46 600,00</div>
<div class="cell" style="right:1162.50px;top:18.25px;line-height:1;font-size:23.8px">1,75%</div>
<div class="cell" style="right:923.00px;top:18.68px;line-height:1;font-size:23.3px">–36 180,00</div>
<div class="cell" style="right:805.50px;top:18.25px;line-height:1;font-size:23.8px">1,48%</div>
<div class="cell" style="right:566.00px;top:18.68px;line-height:1;font-size:23.3px">–7 000,00</div>
<div class="cell" style="right:448.50px;top:18.25px;line-height:1;font-size:23.8px">0,27%</div>
<div class="cell" style="right:209.00px;top:18.68px;line-height:1;font-size:23.3px">–46 600,00</div>
<div class="cell" style="right:91.50px;top:18.25px;line-height:1;font-size:23.8px">1,75%</div>
</div>
<div class="row odd" style="top:956.25px;height:59.55px">
<div class="lbl" style="left:60px;top:17.75px;line-height:1;font-size:24.4px">Інвестиції</div>
<div class="cell" style="right:1637.00px;top:18.68px;line-height:1;font-size:23.3px">0,00</div>
<div class="cell" style="right:1519.50px;top:18.25px;line-height:1;font-size:23.8px">0,00%</div>
<div class="cell" style="right:1280.00px;top:18.68px;line-height:1;font-size:23.3px">–255 999,00</div>
<div class="cell" style="right:1162.50px;top:18.25px;line-height:1;font-size:23.8px">9,63%</div>
<div class="cell" style="right:923.00px;top:18.68px;line-height:1;font-size:23.3px">0,00</div>
<div class="cell" style="right:805.50px;top:18.25px;line-height:1;font-size:23.8px">0,00%</div>
<div class="cell" style="right:566.00px;top:18.68px;line-height:1;font-size:23.3px">0,00</div>
<div class="cell" style="right:448.50px;top:18.25px;line-height:1;font-size:23.8px">0,00%</div>
<div class="cell" style="right:209.00px;top:18.68px;line-height:1;font-size:23.3px">–255 999,00</div>
<div class="cell" style="right:91.50px;top:18.25px;line-height:1;font-size:23.8px">9,63%</div>
</div>
<div class="row even" style="top:1015.80px;height:59.55px">
<div class="lbl" style="left:60px;top:17.75px;line-height:1;font-size:24.4px">Інші витрати</div>
<div class="cell" style="right:1637.00px;top:18.68px;line-height:1;font-size:23.3px">0,00</div>
<div class="cell" style="right:1519.50px;top:18.25px;line-height:1;font-size:23.8px">0,00%</div>
<div class="cell" style="right:1280.00px;top:18.68px;line-height:1;font-size:23.3px">0,00</div>
<div class="cell" style="right:1162.50px;top:18.25px;line-height:1;font-size:23.8px">0,00%</div>
<div class="cell" style="right:923.00px;top:18.68px;line-height:1;font-size:23.3px">–8 900,00</div>
<div class="cell" style="right:805.50px;top:18.25px;line-height:1;font-size:23.8px">0,36%</div>
<div class="cell" style="right:566.00px;top:18.68px;line-height:1;font-size:23.3px">0,00</div>
<div class="cell" style="right:448.50px;top:18.25px;line-height:1;font-size:23.8px">0,00%</div>
<div class="cell" style="right:209.00px;top:18.68px;line-height:1;font-size:23.3px">0,00</div>
<div class="cell" style="right:91.50px;top:18.25px;line-height:1;font-size:23.8px">0,00%</div>
</div>
<div class="row odd" style="top:1075.35px;height:59.55px">
<svg class="abs" style="left:39.0px;top:25px" width="18" height="12" viewBox="0 0 18 12"><polyline points="3,3 9,8.6 15,3" fill="none" stroke="#2f3133" stroke-width="2" stroke-linecap="round" stroke-linejoin="round"/></svg>
<div class="lbl" style="left:60px;top:17.75px;line-height:1;font-size:24.4px">Комунальні платежі</div>
<div class="cell" style="right:1637.00px;top:18.68px;line-height:1;font-size:23.3px">–32 452,43</div>
<div class="cell" style="right:1519.50px;top:18.25px;line-height:1;font-size:23.8px">1,25%</div>
<div class="cell" style="right:1280.00px;top:18.68px;line-height:1;font-size:23.3px">–33 090,78</div>
<div class="cell" style="right:1162.50px;top:18.25px;line-height:1;font-size:23.8px">1,24%</div>
<div class="cell" style="right:923.00px;top:18.68px;line-height:1;font-size:23.3px">–16 388,00</div>
<div class="cell" style="right:805.50px;top:18.25px;line-height:1;font-size:23.8px">0,67%</div>
<div class="cell" style="right:566.00px;top:18.68px;line-height:1;font-size:23.3px">–32 452,43</div>
<div class="cell" style="right:448.50px;top:18.25px;line-height:1;font-size:23.8px">1,25%</div>
<div class="cell" style="right:209.00px;top:18.68px;line-height:1;font-size:23.3px">–33 090,78</div>
<div class="cell" style="right:91.50px;top:18.25px;line-height:1;font-size:23.8px">1,24%</div>
</div>
<div class="row even" style="top:1134.90px;height:59.55px">
<div class="lbl" style="left:84.5px;top:17.75px;line-height:1;font-size:24.4px">Вивезення сміття</div>
<div class="cell" style="right:1637.00px;top:18.68px;line-height:1;font-size:23.3px">–5 789,88</div>
<div class="cell" style="right:1519.50px;top:18.25px;line-height:1;font-size:23.8px">0,22%</div>
<div class="cell" style="right:1280.00px;top:18.68px;line-height:1;font-size:23.3px">–21 200,00</div>
<div class="cell" style="right:1162.50px;top:18.25px;line-height:1;font-size:23.8px">0,80%</div>
<div class="cell" style="right:923.00px;top:18.68px;line-height:1;font-size:23.3px">–5 600,00</div>
<div class="cell" style="right:805.50px;top:18.25px;line-height:1;font-size:23.8px">0,23%</div>
<div class="cell" style="right:566.00px;top:18.68px;line-height:1;font-size:23.3px">–5 789,88</div>
<div class="cell" style="right:448.50px;top:18.25px;line-height:1;font-size:23.8px">0,22%</div>
<div class="cell" style="right:209.00px;top:18.68px;line-height:1;font-size:23.3px">–21 200,00</div>
<div class="cell" style="right:91.50px;top:18.25px;line-height:1;font-size:23.8px">0,80%</div>
</div>
<div class="row odd" style="top:1194.45px;height:59.55px">
<div class="lbl" style="left:84.5px;top:17.75px;line-height:1;font-size:24.4px">Газопостачання</div>
<div class="cell" style="right:1637.00px;top:18.68px;line-height:1;font-size:23.3px">–26 662,55</div>
<div class="cell" style="right:1519.50px;top:18.25px;line-height:1;font-size:23.8px">1,03%</div>
<div class="cell" style="right:1280.00px;top:18.68px;line-height:1;font-size:23.3px">–11 890,78</div>
<div class="cell" style="right:1162.50px;top:18.25px;line-height:1;font-size:23.8px">0,45%</div>
<div class="cell" style="right:923.00px;top:18.68px;line-height:1;font-size:23.3px">–10 788,00</div>
<div class="cell" style="right:805.50px;top:18.25px;line-height:1;font-size:23.8px">0,44%</div>
<div class="cell" style="right:566.00px;top:18.68px;line-height:1;font-size:23.3px">–26 662,55</div>
<div class="cell" style="right:448.50px;top:18.25px;line-height:1;font-size:23.8px">1,03%</div>
<div class="cell" style="right:209.00px;top:18.68px;line-height:1;font-size:23.3px">–11 890,78</div>
<div class="cell" style="right:91.50px;top:18.25px;line-height:1;font-size:23.8px">0,45%</div>
</div>
<div class="row even" style="top:1254.00px;height:59.55px">
<div class="lbl" style="left:60px;top:17.75px;line-height:1;font-size:24.4px">Маркетинг</div>
<div class="cell" style="right:1637.00px;top:18.68px;line-height:1;font-size:23.3px">0,00</div>
<div class="cell" style="right:1519.50px;top:18.25px;line-height:1;font-size:23.8px">0,00%</div>
<div class="cell" style="right:1280.00px;top:18.68px;line-height:1;font-size:23.3px">–3 750,00</div>
<div class="cell" style="right:1162.50px;top:18.25px;line-height:1;font-size:23.8px">0,14%</div>
<div class="cell" style="right:923.00px;top:18.68px;line-height:1;font-size:23.3px">–3 897,00</div>
<div class="cell" style="right:805.50px;top:18.25px;line-height:1;font-size:23.8px">0,16%</div>
<div class="cell" style="right:566.00px;top:18.68px;line-height:1;font-size:23.3px">0,00</div>
<div class="cell" style="right:448.50px;top:18.25px;line-height:1;font-size:23.8px">0,00%</div>
<div class="cell" style="right:209.00px;top:18.68px;line-height:1;font-size:23.3px">–3 750,00</div>
<div class="cell" style="right:91.50px;top:18.25px;line-height:1;font-size:23.8px">0,14%</div>
</div>
<div class="row odd" style="top:1313.55px;height:59.55px">
<div class="lbl" style="left:60px;top:17.75px;line-height:1;font-size:24.4px">Оренда</div>
<div class="cell" style="right:1637.00px;top:18.68px;line-height:1;font-size:23.3px">0,00</div>
<div class="cell" style="right:1519.50px;top:18.25px;line-height:1;font-size:23.8px">0,00%</div>
<div class="cell" style="right:1280.00px;top:18.68px;line-height:1;font-size:23.3px">–50 000,00</div>
<div class="cell" style="right:1162.50px;top:18.25px;line-height:1;font-size:23.8px">1,88%</div>
<div class="cell" style="right:923.00px;top:18.68px;line-height:1;font-size:23.3px">–50 000,00</div>
<div class="cell" style="right:805.50px;top:18.25px;line-height:1;font-size:23.8px">2,04%</div>
<div class="cell" style="right:566.00px;top:18.68px;line-height:1;font-size:23.3px">0,00</div>
<div class="cell" style="right:448.50px;top:18.25px;line-height:1;font-size:23.8px">0,00%</div>
<div class="cell" style="right:209.00px;top:18.68px;line-height:1;font-size:23.3px">–50 000,00</div>
<div class="cell" style="right:91.50px;top:18.25px;line-height:1;font-size:23.8px">1,88%</div>
</div>
<div class="row even" style="top:1373.10px;height:59.55px">
<div class="lbl" style="left:60px;top:17.75px;line-height:1;font-size:24.4px">Постачання</div>
<div class="cell" style="right:1637.00px;top:18.68px;line-height:1;font-size:23.3px">–278 441,46</div>
<div class="cell" style="right:1519.50px;top:18.25px;line-height:1;font-size:23.8px">10,77%</div>
<div class="cell" style="right:1280.00px;top:18.68px;line-height:1;font-size:23.3px">–124 389,22</div>
<div class="cell" style="right:1162.50px;top:18.25px;line-height:1;font-size:23.8px">4,68%</div>
<div class="cell" style="right:923.00px;top:18.68px;line-height:1;font-size:23.3px">–158 413,28</div>
<div class="cell" style="right:805.50px;top:18.25px;line-height:1;font-size:23.8px">6,47%</div>
<div class="cell" style="right:566.00px;top:18.68px;line-height:1;font-size:23.3px">–278 441,46</div>
<div class="cell" style="right:448.50px;top:18.25px;line-height:1;font-size:23.8px">10,77%</div>
<div class="cell" style="right:209.00px;top:18.68px;line-height:1;font-size:23.3px">–124 389,22</div>
<div class="cell" style="right:91.50px;top:18.25px;line-height:1;font-size:23.8px">4,68%</div>
</div>
<div class="row odd" style="top:1432.65px;height:59.55px">
<svg class="abs" style="left:42.5px;top:24px" width="12" height="16" viewBox="0 0 12 16"><polyline points="2.5,2 8.5,8 2.5,14" fill="none" stroke="#2f3133" stroke-width="2" stroke-linecap="round" stroke-linejoin="round"/></svg>
<div class="lbl" style="left:60px;top:17.75px;line-height:1;font-size:24.4px">Розваги для гостей</div>
<div class="cell" style="right:1637.00px;top:18.68px;line-height:1;font-size:23.3px">–2 000,00</div>
<div class="cell" style="right:1519.50px;top:18.25px;line-height:1;font-size:23.8px">0,08%</div>
<div class="cell" style="right:1280.00px;top:18.68px;line-height:1;font-size:23.3px">0,00</div>
<div class="cell" style="right:1162.50px;top:18.25px;line-height:1;font-size:23.8px">0,00%</div>
<div class="cell" style="right:923.00px;top:18.68px;line-height:1;font-size:23.3px">0,00</div>
<div class="cell" style="right:805.50px;top:18.25px;line-height:1;font-size:23.8px">0,00%</div>
<div class="cell" style="right:566.00px;top:18.68px;line-height:1;font-size:23.3px">–2 000,00</div>
<div class="cell" style="right:448.50px;top:18.25px;line-height:1;font-size:23.8px">0,08%</div>
<div class="cell" style="right:209.00px;top:18.68px;line-height:1;font-size:23.3px">0,00</div>
<div class="cell" style="right:91.50px;top:18.25px;line-height:1;font-size:23.8px">0,00%</div>
</div>
<div class="row even" style="top:1492.20px;height:59.55px">
<div class="lbl" style="left:60px;top:17.75px;line-height:1;font-size:24.4px">Харчування працівників</div>
<div class="cell" style="right:1637.00px;top:18.68px;line-height:1;font-size:23.3px">0,00</div>
<div class="cell" style="right:1519.50px;top:18.25px;line-height:1;font-size:23.8px">0,00%</div>
<div class="cell" style="right:1280.00px;top:18.68px;line-height:1;font-size:23.3px">–3 385,34</div>
<div class="cell" style="right:1162.50px;top:18.25px;line-height:1;font-size:23.8px">0,13%</div>
<div class="cell" style="right:923.00px;top:18.68px;line-height:1;font-size:23.3px">–25,50</div>
<div class="cell" style="right:805.50px;top:18.25px;line-height:1;font-size:23.8px">0,00%</div>
<div class="cell" style="right:566.00px;top:18.68px;line-height:1;font-size:23.3px">0,00</div>
<div class="cell" style="right:448.50px;top:18.25px;line-height:1;font-size:23.8px">0,00%</div>
<div class="cell" style="right:209.00px;top:18.68px;line-height:1;font-size:23.3px">–3 385,34</div>
<div class="cell" style="right:91.50px;top:18.25px;line-height:1;font-size:23.8px">0,13%</div>
</div>
<div class="row sec" style="top:1551.75px;height:59.55px">
<div class="lbl" style="left:34.5px;top:18.34px;line-height:1;font-size:23.7px">Прибуток до оподаткування</div>
<div class="cell" style="right:1637.00px;top:18.42px;line-height:1;font-size:23.6px">1 696 128,60</div>
<div class="cell" style="right:1519.50px;top:18.08px;line-height:1;font-size:24.0px">65,60%</div>
<div class="cell" style="right:1280.00px;top:18.42px;line-height:1;font-size:23.6px">1 548 939,12</div>
<div class="cell" style="right:1162.50px;top:18.08px;line-height:1;font-size:24.0px">58,24%</div>
<div class="cell" style="right:923.00px;top:18.42px;line-height:1;font-size:23.6px">1 612 122,95</div>
<div class="cell" style="right:805.50px;top:18.08px;line-height:1;font-size:24.0px">65,82%</div>
<div class="cell" style="right:566.00px;top:18.42px;line-height:1;font-size:23.6px">1 696 128,60</div>
<div class="cell" style="right:448.50px;top:18.08px;line-height:1;font-size:24.0px">65,60%</div>
<div class="cell" style="right:209.00px;top:18.42px;line-height:1;font-size:23.6px">1 548 939,12</div>
<div class="cell" style="right:91.50px;top:18.08px;line-height:1;font-size:24.0px">58,24%</div>
</div>
<div class="row sec" style="top:1611.30px;height:59.55px">
<div class="lbl" style="left:34.5px;top:18.34px;line-height:1;font-size:23.7px">Податки</div>
<div class="cell" style="right:1637.00px;top:18.42px;line-height:1;font-size:23.6px">–141 483,12</div>
<div class="cell" style="right:1519.50px;top:18.08px;line-height:1;font-size:24.0px">5,47%</div>
<div class="cell" style="right:1280.00px;top:18.42px;line-height:1;font-size:23.6px">–145 152,28</div>
<div class="cell" style="right:1162.50px;top:18.08px;line-height:1;font-size:24.0px">5,46%</div>
<div class="cell" style="right:923.00px;top:18.42px;line-height:1;font-size:23.6px">–124 501,12</div>
<div class="cell" style="right:805.50px;top:18.08px;line-height:1;font-size:24.0px">5,08%</div>
<div class="cell" style="right:566.00px;top:18.42px;line-height:1;font-size:23.6px">–141 483,12</div>
<div class="cell" style="right:448.50px;top:18.08px;line-height:1;font-size:24.0px">5,47%</div>
<div class="cell" style="right:209.00px;top:18.42px;line-height:1;font-size:23.6px">–145 152,28</div>
<div class="cell" style="right:91.50px;top:18.08px;line-height:1;font-size:24.0px">5,46%</div>
</div>
<div class="row sec" style="top:1670.85px;height:59.55px">
<div class="lbl" style="left:34.5px;top:18.34px;line-height:1;font-size:23.7px">Прибуток після оподаткування</div>
<div class="cell" style="right:1637.00px;top:18.42px;line-height:1;font-size:23.6px">1 554 645,48</div>
<div class="cell" style="right:1519.50px;top:18.08px;line-height:1;font-size:24.0px">60,12%</div>
<div class="cell" style="right:1280.00px;top:18.42px;line-height:1;font-size:23.6px">1 403 786,84</div>
<div class="cell" style="right:1162.50px;top:18.08px;line-height:1;font-size:24.0px">52,78%</div>
<div class="cell" style="right:923.00px;top:18.42px;line-height:1;font-size:23.6px">1 487 621,83</div>
<div class="cell" style="right:805.50px;top:18.08px;line-height:1;font-size:24.0px">60,74%</div>
<div class="cell" style="right:566.00px;top:18.42px;line-height:1;font-size:23.6px">1 554 645,48</div>
<div class="cell" style="right:448.50px;top:18.08px;line-height:1;font-size:24.0px">60,12%</div>
<div class="cell" style="right:209.00px;top:18.42px;line-height:1;font-size:23.6px">1 403 786,84</div>
<div class="cell" style="right:91.50px;top:18.08px;line-height:1;font-size:24.0px">52,78%</div>
</div>
</div>
<div class="abs" style="left:396px;top:1074.35px;width:595px;height:60.55px;border:2px solid #6396d2"></div>
<div class="abs" style="left:2764px;top:1684px;width:82px;height:82px;border-radius:50%;background:#358ade;box-shadow:0 6px 22px rgba(0,0,0,0.16)"></div>
<svg class="abs" style="left:2784px;top:1702px" width="42" height="46" viewBox="0 0 42 46">
<path d="M6.8 2 H34.4 a4 4 0 0 1 4 4 V42.7 L27.3 38.6 H6.8 a4 4 0 0 1 -4 -4 V6 a4 4 0 0 1 4 -4z" fill="#fff"/>
<path d="M8.6 27.8 Q20.5 36.5 32.4 27.8" fill="none" stroke="#3f7dc6" stroke-width="2.6" stroke-linecap="round"/>
</svg>
</body></html>
